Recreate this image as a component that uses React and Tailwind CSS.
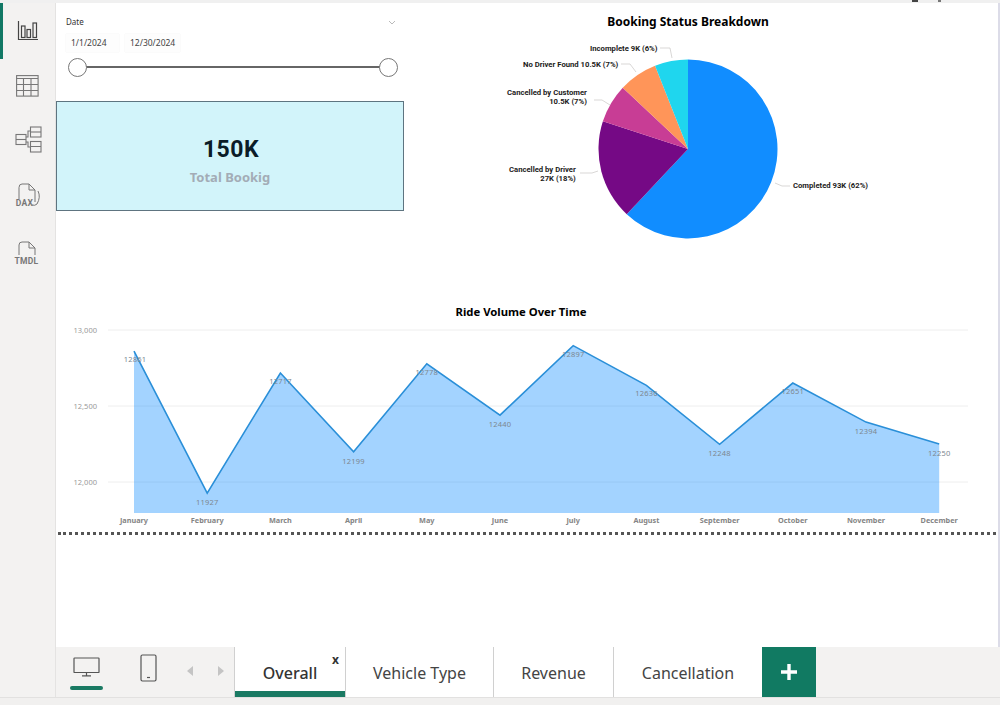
import React from "react";

const sans = "font-['Noto_Sans',sans-serif]";
const din = "font-['Roboto',sans-serif]";

const months = ["January","February","March","April","May","June","July","August","September","October","November","December"];
const vals = [12861,11927,12717,12199,12778,12440,12897,12636,12248,12651,12394,12250];
const X0 = 134, DX = 73.2;
const px = (i) => X0 + i * DX;
const py = (v) => 482 - (v - 12000) * 0.152;

function polar(a, r) {
  const t = (a * 2 * Math.PI);
  return [90 + r * Math.sin(t), 90 - r * Math.cos(t)];
}

function Pie() {
  const parts = [
    [0.62, "#118DFF"],
    [0.18, "#750985"],
    [0.07, "#C83D95"],
    [0.07, "#FF9559"],
    [0.06, "#1FD6EE"],
  ];
  let acc = 0;
  return (
    <svg width="180" height="180" viewBox="0 0 180 180" className="block">
      {parts.map(([f, c]) => {
        const [x1, y1] = polar(acc, 89.5);
        acc += f;
        const [x2, y2] = polar(acc, 89.5);
        return <path key={c} fill={c} d={`M90 90L${x1} ${y1}A89.5 89.5 0 ${f > 0.5 ? 1 : 0} 1 ${x2} ${y2}Z`} />;
      })}
    </svg>
  );
}

function Lab({ className, children }) {
  return <div className={`absolute text-[7.7px] leading-[8.5px] font-bold text-[#1c1b1a] text-right whitespace-nowrap ${din} ${className}`}>{children}</div>;
}

function PieBlock() {
  return (
    <div className="relative flex-1 h-[286px]">
      <div className={`text-center text-[12px] font-bold text-black leading-4 pt-[11px] pr-[26px] ${sans}`}>Booking Status Breakdown</div>
      <div className="absolute left-[194px] top-[55.5px]"><Pie /></div>
      <svg className="absolute inset-0" width="540" height="286" fill="none" stroke="#c8c6c4" strokeWidth="0.7">
        <path d="M256 45H266L268 55" />
        <path d="M217 61H226L232 69" />
        <path d="M190 97H198L206 102" />
        <path d="M176 170H188L194 168" />
        <path d="M371 180L378 183H386" />
      </svg>
      <Lab className="left-[186px] top-[42px]">Incomplete 9K (6%)</Lab>
      <Lab className="left-[119px] top-[57.5px]">No Driver Found 10.5K (7%)</Lab>
      <Lab className="left-[103px] top-[86px]">Cancelled by Customer<br />10.5K (7%)</Lab>
      <Lab className="left-[105px] top-[163px]">Cancelled by Driver<br />27K (18%)</Lab>
      <Lab className="left-[389px] top-[179px]">Completed 93K (62%)</Lab>
    </div>
  );
}

function Slicer() {
  return (
    <div className="w-[348px] h-[100px] relative">
      <div className="flex justify-between pl-[10px] pr-[8px] pt-[14px] items-center">
        <span className={`text-[8px] leading-[10px] text-[#333] ${sans}`}>Date</span>
        <svg width="8" height="5" viewBox="0 0 8 5" fill="none" stroke="#a8a8a8" strokeWidth="0.8"><path d="M1 1l3 3 3-3" /></svg>
      </div>
      <div className={`flex gap-[6px] ml-[10px] mt-[7px] text-[8.5px] text-[#444] ${sans}`}>
        <div className="w-[53px] h-[18px] leading-[18px] pl-[5px] bg-[#fdfdfd] shadow-[0_0_1px_#e8e8e8]">1/1/2024</div>
        <div className="w-[55px] h-[18px] leading-[18px] pl-[5px] bg-[#fdfdfd] shadow-[0_0_1px_#e8e8e8]">12/30/2024</div>
      </div>
      <div className="relative ml-[12px] mr-[6px] mt-[5px] h-[20px] flex items-center justify-between">
        <div className="absolute left-2 right-2 h-[2px] bg-[#666]" />
        <div className="relative w-[19px] h-[19px] rounded-full border-[1.5px] border-[#777] bg-white" />
        <div className="relative w-[19px] h-[19px] rounded-full border-[1.5px] border-[#777] bg-white" />
      </div>
    </div>
  );
}

function Card() {
  return (
    <div className="w-[348px] h-[110px] bg-[#D2F4FA] border border-[#5e7480] flex flex-col items-center pt-[33px]">
      <div className={`text-[23px] leading-[30px] font-bold text-[#0b1c28] tracking-[0.5px] pl-[2px] ${din}`}>150K</div>
      <div className={`text-[13px] leading-[18px] font-bold text-[#a3acb6] mt-[3px] ${sans}`}>Total Bookig</div>
    </div>
  );
}

function LineChart() {
  const pts = vals.map((v, i) => `${px(i)},${py(v)}`).join(" ");
  return (
    <div className="h-[222px] relative">
      <div className={`text-center text-[11.3px] font-bold text-black leading-4 pt-[3px] pr-[12px] ${sans}`}>Ride Volume Over Time</div>
      <svg className="absolute left-0 top-0" width="942" height="230" viewBox="56 301 942 230">
        {[330, 406, 482].map((y) => <line key={y} x1="108" x2="968" y1={y} y2={y} stroke="#eeeeee" strokeWidth="1" />)}
        {[["13,000", 330], ["12,500", 406], ["12,000", 482]].map(([t, y]) => (
          <text key={t} x="97" y={y + 3} textAnchor="end" fontSize="7.5" fill="#9a9a9a" fontFamily="Noto Sans">{t}</text>
        ))}
        <polygon points={`${X0},513 ${pts} ${px(11)},513`} fill="#118DFF" fillOpacity="0.39" />
        <polyline points={pts} fill="none" stroke="#2a8fd8" strokeWidth="1.6" />
        {vals.map((v, i) => {
          const below = [1, 3, 5, 8, 10, 11].includes(i);
          return <text key={i} x={px(i) + (i === 0 ? 1 : 0)} y={py(v) + (below ? 12 : 11)} textAnchor="middle" fontSize="7.5" fill="#7d8790" letterSpacing="0.2" fontFamily="Noto Sans">{v}</text>;
        })}
        {months.map((m, i) => (
          <text key={m} x={px(i)} y="523" textAnchor="middle" fontSize="7.3" fontWeight="700" fill="#858585" fontFamily="Noto Sans">{m}</text>
        ))}
      </svg>
    </div>
  );
}

const iconCls = "block";
function ReportIcon() {
  return (
    <svg className={iconCls} width="22" height="22" viewBox="0 0 22 22" fill="none" stroke="#444" strokeWidth="1.2">
      <path d="M1.5 1v18.5H21" />
      <rect x="4.5" y="6" width="3.5" height="11.5" />
      <rect x="10" y="9.5" width="3.5" height="8" />
      <rect x="16" y="3" width="3.5" height="14.5" />
    </svg>
  );
}
function TableIcon() {
  return (
    <svg className={iconCls} width="23" height="22" viewBox="0 0 23 22" fill="none" stroke="#777" strokeWidth="1.1">
      <rect x="0.6" y="0.6" width="21.5" height="20.5" />
      <path d="M0.6 3.5H22M0.6 9.5H22M0.6 15.5H22M7.5 3.5V21M15 3.5V21" />
    </svg>
  );
}
function ModelIcon() {
  return (
    <svg className={iconCls} width="27" height="27" viewBox="0 0 27 27" fill="none" stroke="#777" strokeWidth="1.1">
      <rect x="1" y="8.5" width="10" height="10" />
      <path d="M1 13.5H11" />
      <rect x="15.5" y="1" width="10.5" height="10" />
      <path d="M15.5 6H26" />
      <rect x="15.5" y="15.5" width="10.5" height="10.5" />
      <path d="M15.5 20.5H26M11 11H13V5H15.5M11 16H13V21H15.5" />
    </svg>
  );
}
function FileLabel({ text, dax }) {
  return (
    <div className="relative w-[30px] h-[26px]">
      <svg className="absolute left-0 top-0" width="30" height="24" viewBox="0 0 30 24" fill="none" stroke="#777" strokeWidth="1">
        {dax
          ? <path d="M7 16V4.5Q7 1 10 1H17L23 7V19M17 1V7H23M26 8Q29 14 25 21Q23 23 20 22" />
          : <path d="M7 14V4Q7 1 10 1H17L23 7V14M17 1V7H23" />}
      </svg>
      <div className={`absolute left-0 right-0 text-center text-[8.5px] leading-[10px] font-bold text-[#777] tracking-[0.3px] ${din} ${dax ? "top-[15px] pr-[4px]" : "top-[15px]"}`}>{text}</div>
    </div>
  );
}

function Sidebar() {
  return (
    <div className="w-[56px] shrink-0 bg-[#f3f2f1] border-r border-[#e4e3e2] relative flex flex-col items-center pt-[17px]">
      <div className="absolute left-0 top-0 w-[3px] h-[56px] bg-[#117865]" />
      <div className="h-[22px] ml-[1px]"><ReportIcon /></div>
      <div className="mt-[33px] h-[22px]"><TableIcon /></div>
      <div className="mt-[29px] h-[27px] ml-[1px]"><ModelIcon /></div>
      <div className="mt-[30px] h-[26px] ml-[-2px]"><FileLabel text="DAX" dax /></div>
      <div className="mt-[32px] h-[26px] ml-[-2px]"><FileLabel text="TMDL" /></div>
    </div>
  );
}

function Tab({ label, w, active, close }) {
  return (
    <div className={`relative h-full bg-white flex items-center justify-center border-l border-[#d0d0d0] ${sans} text-[16px] ${active ? "font-medium text-[#333]" : "text-[#444]"}`} style={{ width: w }}>
      <span className="mt-[1px]">{label}</span>
      {close && <span className="absolute right-[6px] top-[6px] text-[12px] leading-[14px] font-bold text-[#333]">x</span>}
      {active && <div className="absolute left-0 right-0 bottom-0 h-[6px] bg-[#1a7a63]" />}
    </div>
  );
}

function TabBar() {
  return (
    <div className="h-[50px] flex bg-[#f3f2f1]">
      <div className="w-[56px] shrink-0 border-r border-[#e4e3e2]" />
      <div className="w-[178px] shrink-0 relative flex items-start">
        <div className="ml-[14px] mt-[10px] flex flex-col items-center w-[32px]">
          <svg width="27" height="20" viewBox="0 0 27 20" fill="none" stroke="#555" strokeWidth="1.2">
            <rect x="1" y="1" width="25" height="14.5" rx="0.6" />
            <path d="M13.5 15.5V18.5M9 18.8H18" />
          </svg>
          <div className="w-[33px] h-[4px] rounded-full bg-[#1a7a63] mt-[9px]" />
        </div>
        <svg className="ml-[38px] mt-[7px]" width="17" height="28" viewBox="0 0 17 28" fill="none" stroke="#555" strokeWidth="1.2">
          <rect x="1" y="1" width="15" height="26" rx="1.4" />
          <path d="M7 23.5H10" />
        </svg>
        <svg className="ml-[29px] mt-[18px]" width="8" height="12" viewBox="0 0 8 12" fill="#c4c4c4"><path d="M7 1v10L1 6z" /></svg>
        <svg className="ml-[23px] mt-[18px]" width="8" height="12" viewBox="0 0 8 12" fill="#c4c4c4"><path d="M1 1v10l6-5z" /></svg>
      </div>
      <Tab label="Overall" w={111} active close />
      <Tab label="Vehicle Type" w={148} />
      <Tab label="Revenue" w={120} />
      <Tab label="Cancellation" w={149} />
      <div className="w-[54px] h-full bg-[#117a62] flex items-center justify-center">
        <svg width="16" height="16" viewBox="0 0 16 16" className="mb-[1px]"><path d="M6.3 0h3.4v6.3H16v3.4H9.7V16H6.3V9.7H0V6.3h6.3z" fill="#fff" /></svg>
      </div>
    </div>
  );
}

export default function App() {
  return (
    <div className="w-[1000px] h-[705px] bg-white flex flex-col overflow-hidden">
      <div className="h-[3px] bg-[#f0f0f0] shrink-0 flex items-start pl-[912px]">
        <div className="w-[6px] h-[2px] bg-[#444]" />
        <div className="w-[3px] h-[2px] bg-[#777] ml-[20px]" />
      </div>
      <div className="flex h-[644px]">
        <Sidebar />
        <div className="flex-1 border-r-2 border-[#dcdce8] flex flex-col">
          <div className="flex h-[298px]">
            <div className="w-[348px] shrink-0">
              <Slicer />
              <div className="-mt-[2px]"><Card /></div>
            </div>
            <PieBlock />
          </div>
          <LineChart />
          <div className="relative ml-[2px] mr-[2px] mt-[9px] border-t-[3px] border-dotted border-[#555]" />
        </div>
      </div>
      <TabBar />
      <div className="flex-1 bg-[#f1f0ef] border-t border-[#e2e1e0]" />
    </div>
  );
}
